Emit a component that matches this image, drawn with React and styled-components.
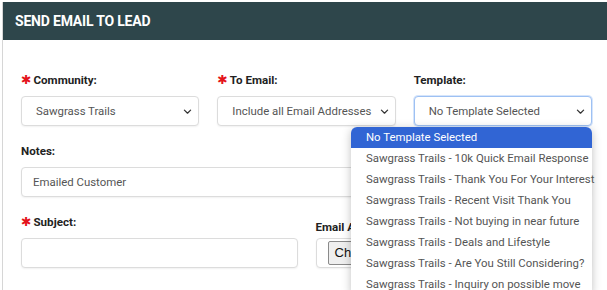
import React from "react";
import styled, { createGlobalStyle } from "styled-components";

const Global = createGlobalStyle`
  body {
    margin: 0;
    background: #fff;
    font-family: Roboto, "Liberation Sans", sans-serif;
  }
`;

const Panel = styled.div`
  margin: 2px 0 0 2px;
  border-left: 1px solid #d6d6d6;
  min-height: 288px;
  background: #fff;
`;

const Header = styled.div`
  height: 38px;
  background: #2e464b;
  color: #fff;
  display: flex;
  align-items: center;
  padding-left: 12px;
  font-size: 14px;
  font-weight: 700;
  text-transform: uppercase;
  letter-spacing: -0.2px;
`;

const Form = styled.div`
  padding: 32px 15px 0 18px;
  display: flex;
  flex-direction: column;
  gap: 17px;
`;

const Row = styled.div`
  display: grid;
  grid-template-columns: repeat(${(p) => p.cols}, minmax(0, 1fr));
  column-gap: 18px;
  align-items: end;
`;

const Field = styled.div`
  position: relative;
  display: flex;
  flex-direction: column;
`;

const Label = styled.div`
  font-size: 11.6px;
  font-weight: 700;
  color: #222;
  line-height: 16px;
  height: 16px;
  margin-bottom: ${(p) => (p.$tight ? "3px" : "8px")};
  display: flex;
  align-items: center;
  white-space: nowrap;
`;

const Star = styled.span`
  color: #e4141b;
  font-family: "DejaVu Sans", sans-serif;
  font-size: 12.5px;
  margin-right: 2px;
`;

const Box = styled.div`
  height: 30px;
  box-sizing: border-box;
  border: 1px solid ${(p) => (p.$focus ? "#9ec1f3" : "#dcdcdc")};
  border-radius: 4px;
  box-shadow: ${(p) =>
    p.$focus ? "0 0 0 1px #d6e5fb" : "0 1px 2px rgba(0,0,0,0.06)"};
  display: flex;
  align-items: center;
  padding: 0 6px 0 ${(p) => (p.$select ? "14px" : "11px")};
  font-size: 11.4px;
  color: #555;
  background: #fff;
`;

const Value = styled.span`
  flex: 1;
  white-space: nowrap;
  overflow: hidden;
`;

const FileButton = styled.span`
  font-family: "Liberation Sans", sans-serif;
  font-size: 13px;
  line-height: 16px;
  color: #111;
  background: #efefef;
  border: 1px solid #8a8a8a;
  border-radius: 2px;
  padding: 3px 6px;
  white-space: nowrap;
`;

const Dropdown = styled.ul`
  position: absolute;
  top: 100%;
  right: 0;
  margin: 1px 0 0;
  padding: 0;
  list-style: none;
  width: 241px;
  background: #fff;
  border-radius: 6px;
  box-shadow: 0 2px 10px rgba(0, 0, 0, 0.25);
  z-index: 10;
`;

const Option = styled.li`
  height: 21px;
  line-height: 21px;
  padding-left: 15px;
  font-size: 11.4px;
  white-space: nowrap;
  color: ${(p) => (p.$active ? "#fff" : "#555")};
  background: ${(p) => (p.$active ? "#3165d4" : "transparent")};
  border-radius: ${(p) => (p.$active ? "6px 6px 0 0" : "0")};
`;

const Chevron = () => (
  <svg width="9" height="9" viewBox="0 0 16 16" fill="none">
    <path
      d="M2.5 5.5l5.5 5.5 5.5-5.5"
      stroke="#333"
      strokeWidth="2.2"
      strokeLinecap="round"
      strokeLinejoin="round"
    />
  </svg>
);

const templates = [
  "No Template Selected",
  "Sawgrass Trails - 10k Quick Email Response",
  "Sawgrass Trails - Thank You For Your Interest",
  "Sawgrass Trails - Recent Visit Thank You",
  "Sawgrass Trails - Not buying in near future",
  "Sawgrass Trails - Deals and Lifestyle",
  "Sawgrass Trails - Are You Still Considering?",
  "Sawgrass Trails - Inquiry on possible move",
];

const App = () => {
  return (
    <Panel>
      <Global />
      <Header>Send Email to Lead</Header>
      <Form>
        <Row cols={3}>
          <Field>
            <Label>
              <Star>✱</Star>Community:
            </Label>
            <Box $select>
              <Value>Sawgrass Trails</Value>
              <Chevron />
            </Box>
          </Field>
          <Field>
            <Label>
              <Star>✱</Star>To Email:
            </Label>
            <Box $select>
              <Value>Include all Email Addresses</Value>
              <Chevron />
            </Box>
          </Field>
          <Field>
            <Label>Template:</Label>
            <Box $select $focus>
              <Value>No Template Selected</Value>
              <Chevron />
            </Box>
            <Dropdown>
              {templates.map((t, i) => (
                <Option key={t} $active={i === 0}>
                  {t}
                </Option>
              ))}
            </Dropdown>
          </Field>
        </Row>
        <Row cols={1}>
          <Field>
            <Label>Notes:</Label>
            <Box>
              <Value>Emailed Customer</Value>
            </Box>
          </Field>
        </Row>
        <Row cols={2}>
          <Field>
            <Label>
              <Star>✱</Star>Subject:
            </Label>
            <Box />
          </Field>
          <Field>
            <Label $tight>Email Attachment:</Label>
            <Box>
              <FileButton>Choose File</FileButton>
            </Box>
          </Field>
        </Row>
      </Form>
    </Panel>
  );
};

export default App;
